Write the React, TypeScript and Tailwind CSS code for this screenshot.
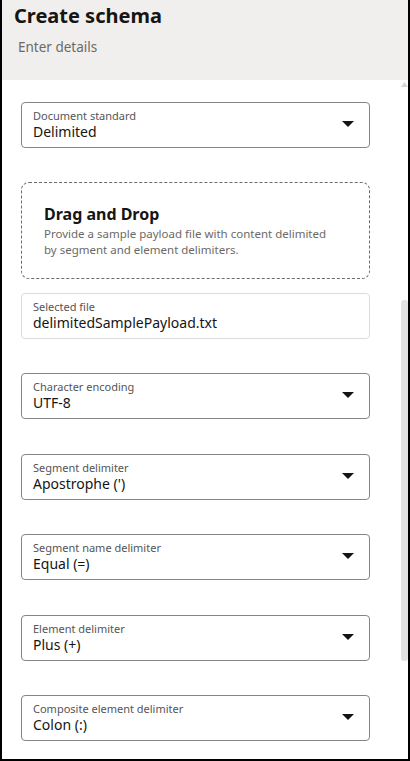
import React from 'react';

// one select-like field, label above value, caret on the right
const Field: React.FC<{ label: string; value: string; caret?: boolean; className?: string }> = ({
  label,
  value,
  caret = true,
  className = '',
}) => (
  <div
    className={`h-[46px] rounded-[4px] border flex items-center pl-[11px] pr-[15px] ${
      caret ? 'border-[#858585]' : 'border-[#dcdcdc]'
    } ${className}`}
  >
    <div className="flex-1 flex flex-col leading-none">
      <span className="text-[11px] text-[#555555] leading-[14px]">{label}</span>
      <span className="text-[14px] text-[#161513] leading-[18px]">{value}</span>
    </div>
    {caret && (
      <svg width="12" height="6" viewBox="0 0 12 6" className="mt-[-2px]">
        <path d="M0 0 H12 L6 6 Z" fill="#161513" />
      </svg>
    )}
  </div>
);

const App: React.FC = () => {
  return (
    <div
      className="w-[410px] h-[761px] overflow-hidden border-l-2 border-r-2 border-b-2 border-black bg-white flex flex-col"
      style={{ fontFamily: '"Noto Sans", "Open Sans", sans-serif' }}
    >
      {/* header */}
      <div className="h-[80px] shrink-0 bg-[#f1efed] pl-[12px]">
        <h1 className="text-[20px] font-bold text-[#161513] leading-[30px] pt-[1px]">Create schema</h1>
        <p className="text-[13.5px] text-[#6b6966] leading-[20px] mt-[6px] pl-[4px]">Enter details</p>
      </div>

      {/* body + scrollbar */}
      <div className="flex-1 flex min-h-0">
        <div className="flex-1 pl-[19px] pr-[30px] pt-[22px] flex flex-col">
          <Field label="Document standard" value="Delimited" />

          <div className="mt-[34px] h-[97px] rounded-[8px] border border-dashed border-[#6b6b6b] pl-[22px] pt-[20px]">
            <div className="text-[16px] font-bold text-[#161513] leading-[22px]">Drag and Drop</div>
            <p className="text-[11.5px] text-[#6b6966] leading-[16px] mt-[1px] pr-[30px]">
              Provide a sample payload file with content delimited by segment and element delimiters.
            </p>
          </div>

          <Field className="mt-[14px]" label="Selected file" value="delimitedSamplePayload.txt" caret={false} />
          <Field className="mt-[34px]" label="Character encoding" value="UTF-8" />
          <Field className="mt-[35px]" label="Segment delimiter" value="Apostrophe (')" />
          <Field className="mt-[34px]" label="Segment name delimiter" value="Equal (=)" />
          <Field className="mt-[35px]" label="Element delimiter" value="Plus (+)" />
          <Field className="mt-[34px]" label="Composite element delimiter" value="Colon (:)" />
        </div>

        <div className="w-[8px] shrink-0 flex flex-col items-center">
          <svg width="7" height="5" viewBox="0 0 7 5" className="mt-[2px]">
            <path d="M0 5 L3.5 0 L7 5 Z" fill="#d6d6d6" />
          </svg>
          <div className="w-[7px] h-[361px] mt-[213px] rounded-[3px] bg-[#e2e2e2]" />
        </div>
      </div>
    </div>
  );
};

export default App;
